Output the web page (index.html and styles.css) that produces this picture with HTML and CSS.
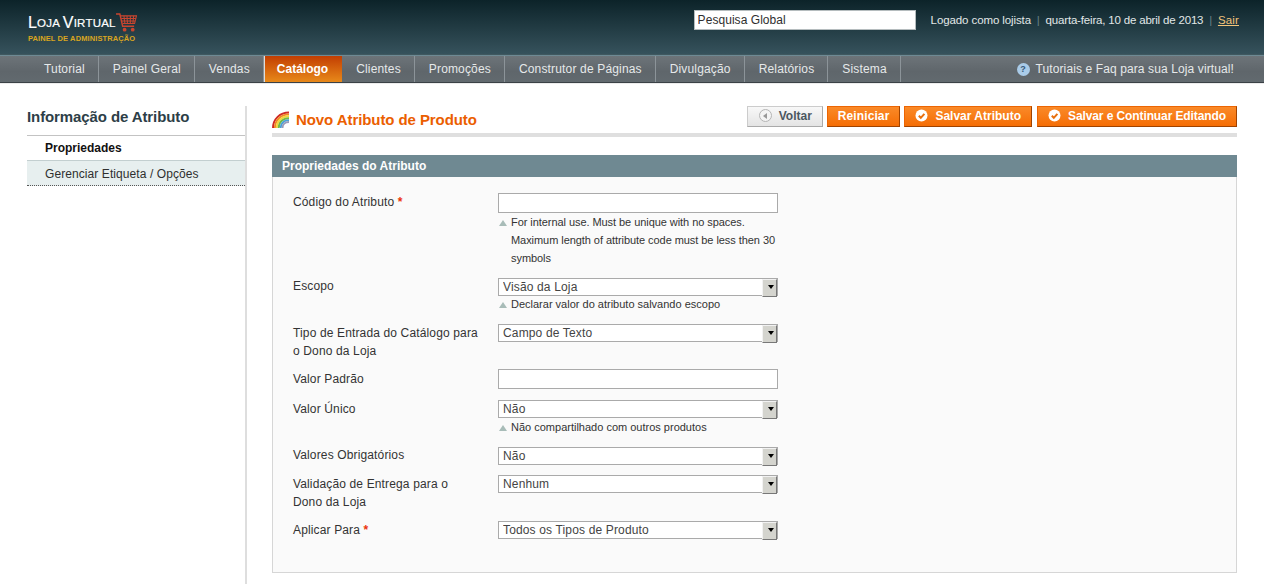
FILE: index.html
```html
<!DOCTYPE html>
<html lang="pt-BR">
<head>
<meta charset="utf-8">
<title>Novo Atributo de Produto</title>
<link rel="stylesheet" href="styles.css">
</head>
<body>
<header class="top">
  <div class="logo">
    <div class="logo-name"><span class="cap">L</span>OJA <span class="cap">V</span>IRTUAL<svg class="cart" width="21" height="20" viewBox="0 0 22 21"><path d="M0 1h4l3 13h12" fill="none" stroke="#c9452f" stroke-width="1.600"/><path d="M4.500 3H21.500l-2 8H7M5.500 5.700H21M6 8.300H20.300M8.300 3l1 8M11.500 3l.5 8M15 3v8M18.500 3l-.8 8" fill="none" stroke="#c9452f" stroke-width="1.100"/><circle cx="9" cy="17.500" r="2" fill="#c9452f"/><circle cx="17.500" cy="17.500" r="2" fill="#c9452f"/></svg></div>
    <div class="logo-sub">PAINEL DE ADMINISTRAÇÃO</div>
  </div>
  <div class="top-right">
    <input class="search" type="text" value="Pesquisa Global">
    <div class="user-info">Logado como lojista <span class="sep">|</span> <span class="date">quarta-feira, 10 de abril de 2013</span> <span class="sep">|</span> <a href="#">Sair</a></div>
  </div>
</header>
<nav class="nav">
  <ul class="menu">
    <li>Tutorial</li>
    <li>Painel Geral</li>
    <li>Vendas</li>
    <li class="active">Catálogo</li>
    <li>Clientes</li>
    <li>Promoções</li>
    <li>Construtor de Páginas</li>
    <li>Divulgação</li>
    <li>Relatórios</li>
    <li>Sistema</li>
  </ul>
  <div class="help"><span class="help-icon">?</span>Tutoriais e Faq para sua Loja virtual!</div>
</nav>
<div class="page">
  <aside class="side">
    <h3 class="side-title">Informação de Atributo</h3>
    <a class="tab tab-on" href="#">Propriedades</a>
    <a class="tab tab-off" href="#">Gerenciar Etiqueta / Opções</a>
  </aside>
  <main class="main">
    <div class="head">
      <h3 class="title"><svg class="rainbow" width="18" height="17" viewBox="0 0 18 17"><g fill="none" stroke-width="1.900"><path d="M1 17C1 8 8 1.500 17 1.500" stroke="#cf2a24"/><path d="M2.900 17C2.900 9 9 3.400 17 3.400" stroke="#f08a24"/><path d="M4.800 17C4.800 10 10 5.300 17 5.300" stroke="#f2d53a"/><path d="M6.700 17C6.700 11 11 7.200 17 7.200" stroke="#70bb44"/><path d="M8.600 17C8.600 12 12 9.100 17 9.100" stroke="#4aa0d8"/><path d="M10.500 17C10.500 13.500 13 11 17 11" stroke="#9a9ab8"/></g></svg>Novo Atributo de Produto</h3>
      <div class="actions">
        <button class="btn btn-back"><span class="ico-back"></span>Voltar</button>
        <button class="btn btn-reset">Reiniciar</button>
        <button class="btn"><svg class="ico-ok" width="13" height="13" viewBox="0 0 13 13"><circle cx="6.500" cy="6.500" r="6" fill="#fff"/><path d="M3.800 6.800l2 2 3.600-4" fill="none" stroke="#e8700f" stroke-width="2"/></svg>Salvar Atributo</button>
        <button class="btn btn-long"><svg class="ico-ok" width="13" height="13" viewBox="0 0 13 13"><circle cx="6.500" cy="6.500" r="6" fill="#fff"/><path d="M3.800 6.800l2 2 3.600-4" fill="none" stroke="#e8700f" stroke-width="2"/></svg>Salvar e Continuar Editando</button>
      </div>
    </div>
    <h4 class="sec-head">Propriedades do Atributo</h4>
    <form class="fieldset">
      <div class="row r-code">
        <label>Código do Atributo <em>*</em></label>
        <div class="val">
          <input class="txt" type="text">
          <p class="note">For internal use. Must be unique with no spaces. Maximum length of attribute code must be less then 30 symbols</p>
        </div>
      </div>
      <div class="row r-scope">
        <label>Escopo</label>
        <div class="val">
          <div class="sel"><select><option>Visão da Loja</option></select></div>
          <p class="note">Declarar valor do atributo salvando escopo</p>
        </div>
      </div>
      <div class="row r-type">
        <label>Tipo de Entrada do Catálogo para o Dono da Loja</label>
        <div class="val"><div class="sel"><select><option>Campo de Texto</option></select></div></div>
      </div>
      <div class="row r-def">
        <label>Valor Padrão</label>
        <div class="val"><input class="txt" type="text"></div>
      </div>
      <div class="row r-uniq">
        <label>Valor Único</label>
        <div class="val">
          <div class="sel"><select><option>Não</option></select></div>
          <p class="note">Não compartilhado com outros produtos</p>
        </div>
      </div>
      <div class="row r-req">
        <label>Valores Obrigatórios</label>
        <div class="val"><div class="sel"><select><option>Não</option></select></div></div>
      </div>
      <div class="row r-valid">
        <label>Validação de Entrega para o Dono da Loja</label>
        <div class="val"><div class="sel"><select><option>Nenhum</option></select></div></div>
      </div>
      <div class="row r-apply">
        <label>Aplicar Para <em>*</em></label>
        <div class="val"><div class="sel"><select><option>Todos os Tipos de Produto</option></select></div></div>
      </div>
    </form>
  </main>
</div>
</body>
</html>
```
FILE: styles.css
```css
* { box-sizing: border-box; }
html, body { margin: 0; padding: 0; }
body { background: #fff; color: #2f2f2f; font: 12px/18px "Liberation Sans", Arial, sans-serif; height: 584px; overflow: hidden; }
h3, h4, p, ul { margin: 0; padding: 0; }

.top { height: 54px; background: linear-gradient(#0c2329, #36525c); display: flex; justify-content: space-between; padding: 10px 25px 0 28px; }
.logo { color: #fff; }
.logo-name { font-size: 11.500px; line-height: 16px; height: 20px; padding-top: 5px; letter-spacing: .2px; display: flex; align-items: flex-start; white-space: pre; -webkit-text-stroke: .2px #fff; }
.cap { font-size: 16px; }
.cart { margin: -2px 0 0 0; }
.logo-sub { font-size: 7.500px; line-height: 10px; font-weight: bold; color: #d9a520; margin-top: 4px; letter-spacing: .1px; }
.top-right { display: flex; align-items: flex-start; }
.search { width: 222px; height: 20px; border: 1px solid #b5bcbe; background: #fff; padding: 0 3px; color: #2f2f2f; font: 12px "Liberation Sans", Arial, sans-serif; letter-spacing: .05px; }
.user-info { color: #e2e8e8; font-size: 11.500px; line-height: 20px; margin-left: 15px; letter-spacing: -.1px; }
.user-info a { color: #f3c57b; letter-spacing: .15px; }
.sep { color: #6a8088; margin: 0 2.750px; }
.date { letter-spacing: -.18px; }

.nav { height: 28px; margin-top: 1px; background: linear-gradient(#6d7479, #5f666b 60%, #626a6f); border-top: 1px solid #6e8a94; border-bottom: 1px solid #3a4146; display: flex; justify-content: space-between; padding-left: 30px; position: relative; box-shadow: 0 -1px 0 #40585f; }
.menu { display: flex; list-style: none; }
.menu li { color: #e6e9ea; height: 26px; line-height: 26px; padding: 0 13px 0 14px; border-right: 1px solid #8c9499; letter-spacing: .16px; }
.menu li.active { color: #fff; font-weight: bold; background: linear-gradient(#c23e02, #e8891a); border-left: 1px solid #ddd; border-right: 0; padding: 0 14px 0 12px; letter-spacing: 0; }
.help { color: #e6e9ea; line-height: 24px; padding-right: 30px; display: flex; align-items: center; font-size: 12px; letter-spacing: .11px; }
.help-icon { width: 13px; height: 13px; border-radius: 50%; background: #a9cbe8; color: #35587a; font-size: 9px; font-weight: bold; line-height: 13px; text-align: center; margin-right: 6px; letter-spacing: 0; }

.page { display: flex; padding: 22px 27px 0 27px; border-top: 1px solid #ececec; }
.side { width: 220px; height: 500px; border-right: 2px solid #dedede; margin-right: 25px; flex: none; }
.side-title { font-size: 15px; line-height: 18px; color: #2d3e47; height: 30px; padding-top: 2px; border-bottom: 1px solid #c3c3c3; font-weight: bold; letter-spacing: -.1px; }
.tab { display: block; color: #2f2f2f; text-decoration: none; padding-left: 18px; }
.tab-on { height: 25px; line-height: 24px; font-weight: bold; color: #111; border-bottom: 1px solid #c3cfd0; }
.tab-off { height: 25px; line-height: 26px; background: #e7efef; border-bottom: 1px dotted #555; letter-spacing: .08px; }

.main { flex: 1; min-width: 0; }
.head { height: 31px; border-bottom: 4px solid #dfdfdf; display: flex; justify-content: space-between; align-items: flex-start; }
.title { color: #eb5e00; font-size: 15px; line-height: 18px; font-weight: bold; display: flex; align-items: flex-start; padding-top: 5px; letter-spacing: -.08px; }
.rainbow { margin: 0 6px 0 0; }
.actions { display: flex; gap: 4px; }
.btn { height: 21px; border: 1px solid #c45500; border-color: #ed6502 #a04300 #a04300 #ed6502; background: linear-gradient(#fa8a28, #f56d05); color: #fff; font: bold 12px "Liberation Sans", Arial, sans-serif; padding: 0 10px 2px; display: flex; align-items: center; white-space: nowrap; }
.btn-reset { letter-spacing: .1px; }
.btn-long { letter-spacing: -.1px; margin-left: 1px; }
.btn-back { border-color: #ccc #aaa #aaa #ccc; background: linear-gradient(#f8f8f8, #e4e4e4); color: #4b5760; padding: 0 10px 2px 11px; }
.ico-back { width: 13px; height: 13px; border-radius: 50%; border: 1px solid #b5b5b5; background: #f4f4f4; margin-right: 7px; position: relative; }
.ico-back::after { content: ""; position: absolute; left: 3px; top: 3px; border: 3px solid transparent; border-left: 0; border-right: 4px solid #999; }
.ico-ok { margin-right: 7px; }

.sec-head { margin-top: 18px; height: 22px; background: #6f8992; color: #fff; font-size: 12px; line-height: 22px; padding-left: 10px; font-weight: bold; }
.fieldset { height: 396px; background: #fafafa; border: 1px solid #d6d6d6; border-top: 0; padding: 16px 0 0 20px; }
.row { display: flex; align-items: flex-start; }
.row label { width: 205px; padding-right: 19px; flex: none; color: #333; letter-spacing: .14px; }
.row em { color: #eb340a; font-style: normal; font-weight: bold; }
.val { width: 280px; }
.txt { display: block; width: 280px; height: 20px; border: 1px solid #aaa; background: #fff; }
.r-def .txt { margin-top: -1px; }
.note { font-size: 11px; line-height: 18px; padding-left: 13px; color: #333; position: relative; margin-right: -4px; }
.r-code .note { letter-spacing: -.06px; }
.note::before { content: ""; position: absolute; left: 1px; top: 7px; border: 4px solid transparent; border-top: 0; border-bottom: 6px solid #a8bcb8; }
.sel { position: relative; width: 280px; height: 18px; }
.sel select { display: block; width: 280px; height: 18px; appearance: none; border: 1px solid #aaa; border-radius: 0; background: #fff; padding: 0 0 0 4px; color: #444; font: 12px "Liberation Sans", Arial, sans-serif; letter-spacing: .15px; }
.sel::after { content: ""; position: absolute; right: 1px; top: 1px; width: 13px; height: 16px; background: #d4d4ce; border: 1px solid; border-color: #f2f2f2 #777 #777 #f2f2f2; pointer-events: none; }
.sel::before { content: ""; position: absolute; right: 4px; top: 7px; border: 3.500px solid transparent; border-top: 4px solid #000; border-bottom: 0; z-index: 1; pointer-events: none; }
.r-code { height: 85px; }
.r-scope { height: 46px; }
.r-scope label { margin-top: -1px; }
.r-scope .note { margin-top: -1px; }
.r-type { height: 46px; }
.r-def { height: 30px; }
.r-uniq { height: 47px; }
.r-req { height: 28px; }
.r-req label { margin-top: -1px; }
.r-valid { height: 46px; }
.r-apply { height: 30px; }
```
